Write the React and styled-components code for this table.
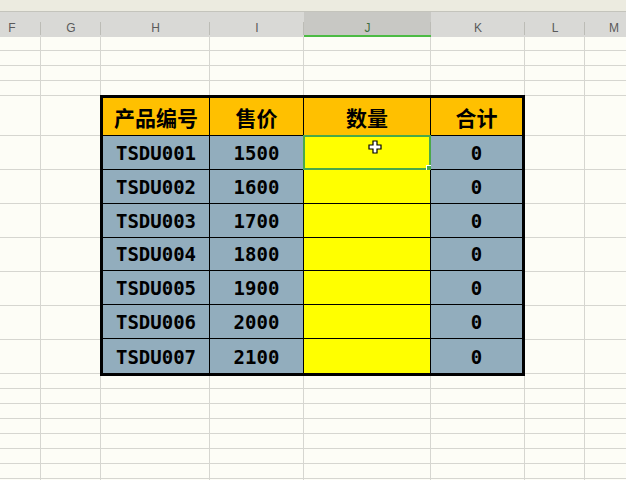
import React from 'react';
import styled, { createGlobalStyle } from 'styled-components';

const GlobalStyle = createGlobalStyle`
  html, body {
    margin: 0;
    padding: 0;
    background: #fdfdf6;
  }
`;

const COLS = '58px 60px 109px 94px 127px 94px 60px 58px';
const ROWS = 'repeat(4, 15px) 40px repeat(7, 34px) repeat(8, 15px)';
const LETTERS = ['F', 'G', 'H', 'I', 'J', 'K', 'L', 'M'];

const products = [
  { code: 'TSDU001', price: 1500 },
  { code: 'TSDU002', price: 1600 },
  { code: 'TSDU003', price: 1700 },
  { code: 'TSDU004', price: 1800 },
  { code: 'TSDU005', price: 1900 },
  { code: 'TSDU006', price: 2000 },
  { code: 'TSDU007', price: 2100 }
];

const Screen = styled.div`
  width: 626px;
  height: 480px;
  overflow: hidden;
  background: #fdfdf6;
  display: flex;
  flex-direction: column;
`;

const TopStrip = styled.div`
  height: 11px;
  flex: none;
  background: #ecebe0;
  border-bottom: 1px solid #c4c4bc;
`;

const ColumnBar = styled.div`
  display: grid;
  grid-template-columns: ${COLS};
  height: 24px;
  flex: none;
  margin-left: -17px;
  width: 660px;
  background: #d9d9d6;
`;

const ColumnLetter = styled.div`
  position: relative;
  display: flex;
  justify-content: center;
  padding-top: 9px;
  box-sizing: border-box;
  font-family: "Liberation Sans", Arial, sans-serif;
  font-size: 12px;
  color: ${({ active }) => (active ? '#3f6f3f' : '#5a5a5a')};
  background: ${({ active }) => (active ? '#c8c8c4' : 'transparent')};
  border-bottom: 2px solid ${({ active }) => (active ? '#4cbb44' : '#d9d9d6')};
  &::after {
    content: '';
    position: absolute;
    right: 0;
    top: 10px;
    bottom: 0;
    width: 1px;
    background: #bcbcb6;
  }
`;

const Sheet = styled.div`
  display: grid;
  grid-template-columns: ${COLS};
  grid-template-rows: ${ROWS};
  margin-left: -17px;
  width: 660px;
`;

const GridCell = styled.div`
  border-right: 1px solid #d6d6d0;
  border-bottom: 1px solid #d6d6d0;
  grid-column: ${({ col }) => col};
  grid-row: ${({ row }) => row};
`;

const Table = styled.div`
  grid-column: 3 / 7;
  grid-row: 5 / 13;
  margin: -1px 0 -2px -1px;
  border: 3px solid #000;
  display: grid;
  grid-template-columns: 107px 94px 127px 1fr;
  grid-template-rows: 38px repeat(7, 1fr);
  position: relative;
  z-index: 1;
`;

const Cell = styled.div`
  position: relative;
  display: flex;
  align-items: center;
  justify-content: center;
  box-sizing: border-box;
  background: ${({ tone }) =>
    tone === 'head' ? '#ffc000' : tone === 'input' ? '#ffff00' : '#92adbd'};
  border-right: ${({ last }) => (last ? 'none' : '1px solid #000')};
  border-bottom: ${({ bottom }) => (bottom ? 'none' : '1px solid #000')};
  font-family: ${({ tone }) =>
    tone === 'head'
      ? '"Noto Sans CJK SC", "Noto Sans", sans-serif'
      : '"DejaVu Sans Mono", "Liberation Mono", monospace'};
  font-weight: 700;
  font-size: ${({ tone }) => (tone === 'head' ? '21px' : '19px')};
  color: #000;
  padding-top: ${({ tone }) => (tone === 'head' ? '0' : '1px')};
`;

const Selection = styled.div`
  position: absolute;
  left: -1px;
  top: -1px;
  right: -1px;
  bottom: -1px;
  border: 2px solid #4aa84a;
  pointer-events: none;
  &::after {
    content: '';
    position: absolute;
    right: -4px;
    bottom: -4px;
    width: 5px;
    height: 5px;
    background: #4aa84a;
    border: 1px solid #fff;
  }
`;

const Cursor = styled.svg`
  position: absolute;
  left: 64px;
  top: 4px;
`;

const headers = ['产品编号', '售价', '数量', '合计'];

export default function App() {
  const bgCells = [];
  for (let r = 1; r <= 20; r++) {
    for (let c = 1; c <= 8; c++) {
      if (r >= 5 && r <= 12 && c >= 3 && c <= 6) continue;
      bgCells.push(<GridCell key={`${r}-${c}`} row={r} col={c} />);
    }
  }

  return (
    <Screen>
      <GlobalStyle />
      <TopStrip />
      <ColumnBar>
        {LETTERS.map((l) => (
          <ColumnLetter key={l} active={l === 'J'}>{l}</ColumnLetter>
        ))}
      </ColumnBar>
      <Sheet>
        {bgCells}
        <Table>
          {headers.map((h, i) => (
            <Cell key={h} tone="head" last={i === 3}>{h}</Cell>
          ))}
          {products.map((p, idx) => {
            const bottom = idx === products.length - 1;
            return (
              <React.Fragment key={p.code}>
                <Cell bottom={bottom}>{p.code}</Cell>
                <Cell bottom={bottom}>{p.price}</Cell>
                <Cell tone="input" bottom={bottom}>
                  {idx === 0 && (
                    <>
                      <Selection />
                      <Cursor width="14" height="14" viewBox="0 0 14 14">
                        <path
                          d="M5 1h4v4h4v4H9v4H5V9H1V5h4z"
                          fill="#fff"
                          stroke="#000"
                          strokeWidth="1.2"
                        />
                      </Cursor>
                    </>
                  )}
                </Cell>
                <Cell last bottom={bottom}>0</Cell>
              </React.Fragment>
            );
          })}
        </Table>
      </Sheet>
    </Screen>
  );
}
